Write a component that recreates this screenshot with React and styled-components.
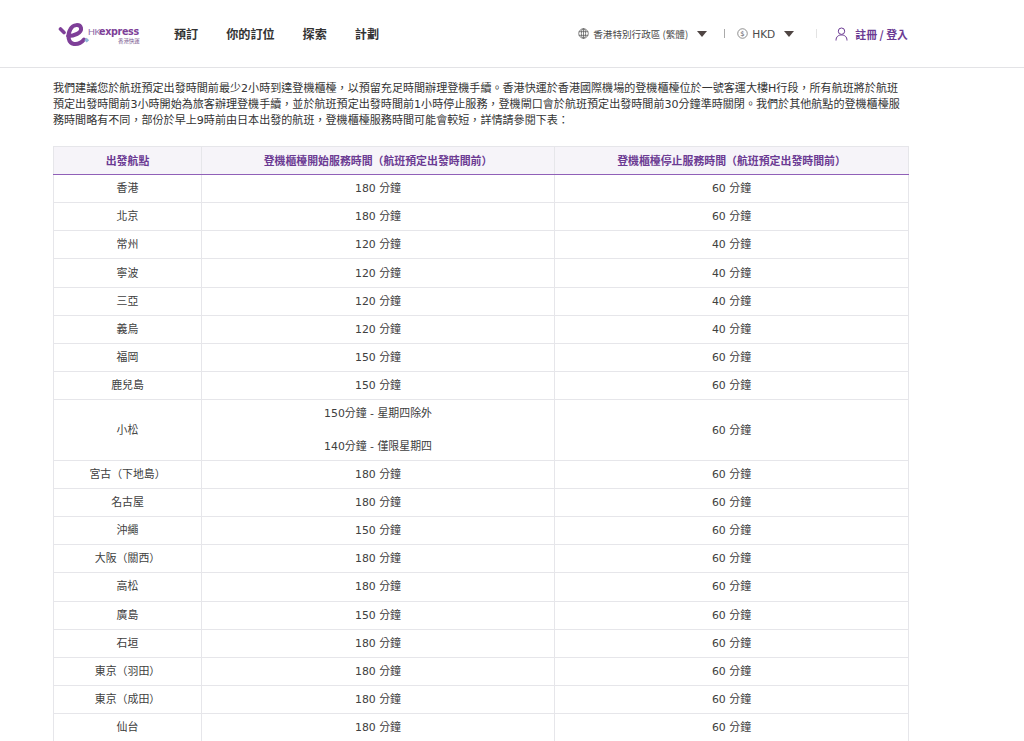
import React from "react";
import styled, { createGlobalStyle } from "styled-components";

const Global = createGlobalStyle`
  html, body { margin: 0; padding: 0; background: #fff; overflow: hidden; height: 741px; }
  body { font-family: "DejaVu Sans", "Noto Sans CJK TC", sans-serif; color: #333; }
`;
const Header = styled.header`
  height: 67px; border-bottom: 1px solid #e3e3e6; display: flex; align-items: center;
  padding: 0 116px 0 58px; justify-content: space-between;
`;
const Left = styled.div`display: flex; align-items: center;`;
const LogoWrap = styled.div`width: 84px; height: 26px; margin-right: 32px; display: flex;`;
const Nav = styled.nav`display: flex; gap: 28px;`;
const NavItem = styled.a`font-size: 12.1px; font-weight: 700; color: #333; font-family: "Noto Sans CJK TC", sans-serif; line-height: 16px;`;
const Right = styled.div`display: flex; align-items: center; font-size: 9.6px; color: #4a4a4a; font-family: "Noto Sans CJK TC", sans-serif;`;
const Selector = styled.div`display: flex; align-items: center; gap: 4px;`;
const Caret = styled.span`width: 0; height: 0; border-left: 5.5px solid transparent; border-right: 5.5px solid transparent; border-top: 6px solid #4f4543; margin-left: 5px;`;
const Sep = styled.span`width: 1px; height: 9px; background: ${p => p.$c}; margin: 0 ${p => p.$r}px 0 ${p => p.$l}px;`;
const Login = styled.a`display: flex; align-items: center; gap: 7px; color: #6b3a93; font-weight: 700; font-size: 10.9px;`;
const Hkd = styled.span`font-family: "DejaVu Sans", sans-serif; font-size: 10.6px;`;
const Main = styled.main`padding: 13px 116px 0 53px;`;
const Para = styled.p`margin: 0 0 17px; font-size: 11.07px; line-height: 16px; color: #333; width: 855px;`;
const Table = styled.table`width: 855px; border-collapse: collapse; table-layout: fixed; font-size: 10.9px;`;
const Th = styled.th`
  height: 28px; padding: 0 0 1px; background: #f6f4f9; color: #6b3a93; font-weight: 700; font-size: 10.9px;
  border: 1px solid #e6e6ea; border-bottom: 1px solid #9060b8; text-align: center; box-sizing: border-box;
`;
const Td = styled.td`
  height: 28.16px; padding: 1px 0 0; border: 1px solid #e6e6ea; text-align: center; color: #404040; box-sizing: border-box; line-height: 16px;
`;
const Note = styled.div`margin: ${p => p.$m};`;

const Logo = () => (
  <svg width="84" height="26" viewBox="0 0 84 26">
    <path d="M10 15 C16 15 24 12 23 7 C22 3 15 3 12.5 8 C9 14 10 22 16 23 C20 23.5 24 21 26 18.5" fill="none" stroke="#7e3f98" strokeWidth="4" strokeLinecap="round" />
    <path d="M2.5 8 L6 11.5" stroke="#7e3f98" strokeWidth="3.6" strokeLinecap="round" />
    <rect x="27" y="17.5" width="3.4" height="3.4" transform="rotate(45 28.7 19.2)" fill="#8fb6d8" />
    <text x="30" y="13.5" fontFamily="Liberation Sans" fontSize="9.5" fill="#8c6aa8" letterSpacing="-.3">HK</text>
    <text x="41" y="13.5" fontFamily="DejaVu Sans" fontWeight="700" fontSize="9.6" fill="#7e3f98" letterSpacing="-.35">express</text>
    <text x="60" y="21.5" fontFamily="Noto Sans CJK TC" fontSize="5.4" fill="#7a5a90">香港快運</text>
  </svg>
);
const Globe = () => (
  <svg width="11" height="11" viewBox="0 0 12 12" fill="none" stroke="#555" strokeWidth=".8">
    <circle cx="6" cy="6" r="5.2" /><ellipse cx="6" cy="6" rx="2.3" ry="5.2" /><path d="M1 4h10M1 8h10M6 .8v10.4" />
  </svg>
);
const Coin = () => (
  <svg width="11" height="11" viewBox="0 0 12 12" fill="none" stroke="#666" strokeWidth=".8">
    <circle cx="6" cy="6" r="5.2" /><text x="6" y="8.6" fontSize="7.5" textAnchor="middle" fill="#666" stroke="none" fontFamily="DejaVu Sans">$</text>
  </svg>
);
const User = () => (
  <svg width="13" height="14" viewBox="0 0 13 14" fill="none" stroke="#6b3a93" strokeWidth="1">
    <circle cx="6.5" cy="4.2" r="3.2" /><path d="M1 13.5 C1 9.5 3.5 8 6.5 8 C9.5 8 12 9.5 12 13.5" />
  </svg>
);

const rows = [
  ["香港", "180 分鐘", "60 分鐘"], ["北京", "180 分鐘", "60 分鐘"], ["常州", "120 分鐘", "40 分鐘"],
  ["寧波", "120 分鐘", "40 分鐘"], ["三亞", "120 分鐘", "40 分鐘"], ["義烏", "120 分鐘", "40 分鐘"],
  ["福岡", "150 分鐘", "60 分鐘"], ["鹿兒島", "150 分鐘", "60 分鐘"], ["小松", null, "60 分鐘"],
  ["宮古（下地島）", "180 分鐘", "60 分鐘"], ["名古屋", "180 分鐘", "60 分鐘"], ["沖繩", "150 分鐘", "60 分鐘"],
  ["大阪（關西）", "180 分鐘", "60 分鐘"], ["高松", "180 分鐘", "60 分鐘"], ["廣島", "150 分鐘", "60 分鐘"],
  ["石垣", "180 分鐘", "60 分鐘"], ["東京（羽田）", "180 分鐘", "60 分鐘"], ["東京（成田）", "180 分鐘", "60 分鐘"],
  ["仙台", "180 分鐘", "60 分鐘"],
];

export default function App() {
  return (
    <div lang="zh-Hant">
      <Global />
      <Header>
        <Left>
          <LogoWrap><Logo /></LogoWrap>
          <Nav>
            <NavItem>預訂</NavItem><NavItem>你的訂位</NavItem><NavItem>探索</NavItem><NavItem>計劃</NavItem>
          </Nav>
        </Left>
        <Right>
          <Selector><Globe /><span>香港特別行政區 (繁體)</span><Caret /></Selector>
          <Sep $c="#aaa" $l={17} $r={12} />
          <Selector><Coin /><Hkd>HKD</Hkd><Caret /></Selector>
          <Sep $c="#e3e3e3" $l={22} $r={18} />
          <Login><User /><span>註冊 / 登入</span></Login>
        </Right>
      </Header>
      <Main>
        <Para>我們建議您於航班預定出發時間前最少2小時到達登機櫃檯，以預留充足時間辦理登機手續。香港快運於香港國際機場的登機櫃檯位於一號客運大樓H行段，所有航班將於航班預定出發時間前3小時開始為旅客辦理登機手續，並於航班預定出發時間前1小時停止服務，登機閘口會於航班預定出發時間前30分鐘準時關閉。我們於其他航點的登機櫃檯服務時間略有不同，部份於早上9時前由日本出發的航班，登機櫃檯服務時間可能會較短，詳情請參閱下表：</Para>
        <Table>
          <colgroup><col style={{ width: 148 }} /><col style={{ width: 353 }} /><col style={{ width: 354 }} /></colgroup>
          <thead>
            <tr><Th>出發航點</Th><Th>登機櫃檯開始服務時間（航班預定出發時間前）</Th><Th>登機櫃檯停止服務時間（航班預定出發時間前）</Th></tr>
          </thead>
          <tbody>
            {rows.map(r => (
              <tr key={r[0]}>
                <Td>{r[0]}</Td>
                <Td>
                  {r[1] ?? (<><Note $m="5px 0 17px">150分鐘 - 星期四除外</Note><Note $m="0 0 4.5px">140分鐘 - 僅限星期四</Note></>)}
                </Td>
                <Td>{r[2]}</Td>
              </tr>
            ))}
          </tbody>
        </Table>
      </Main>
    </div>
  );
}
